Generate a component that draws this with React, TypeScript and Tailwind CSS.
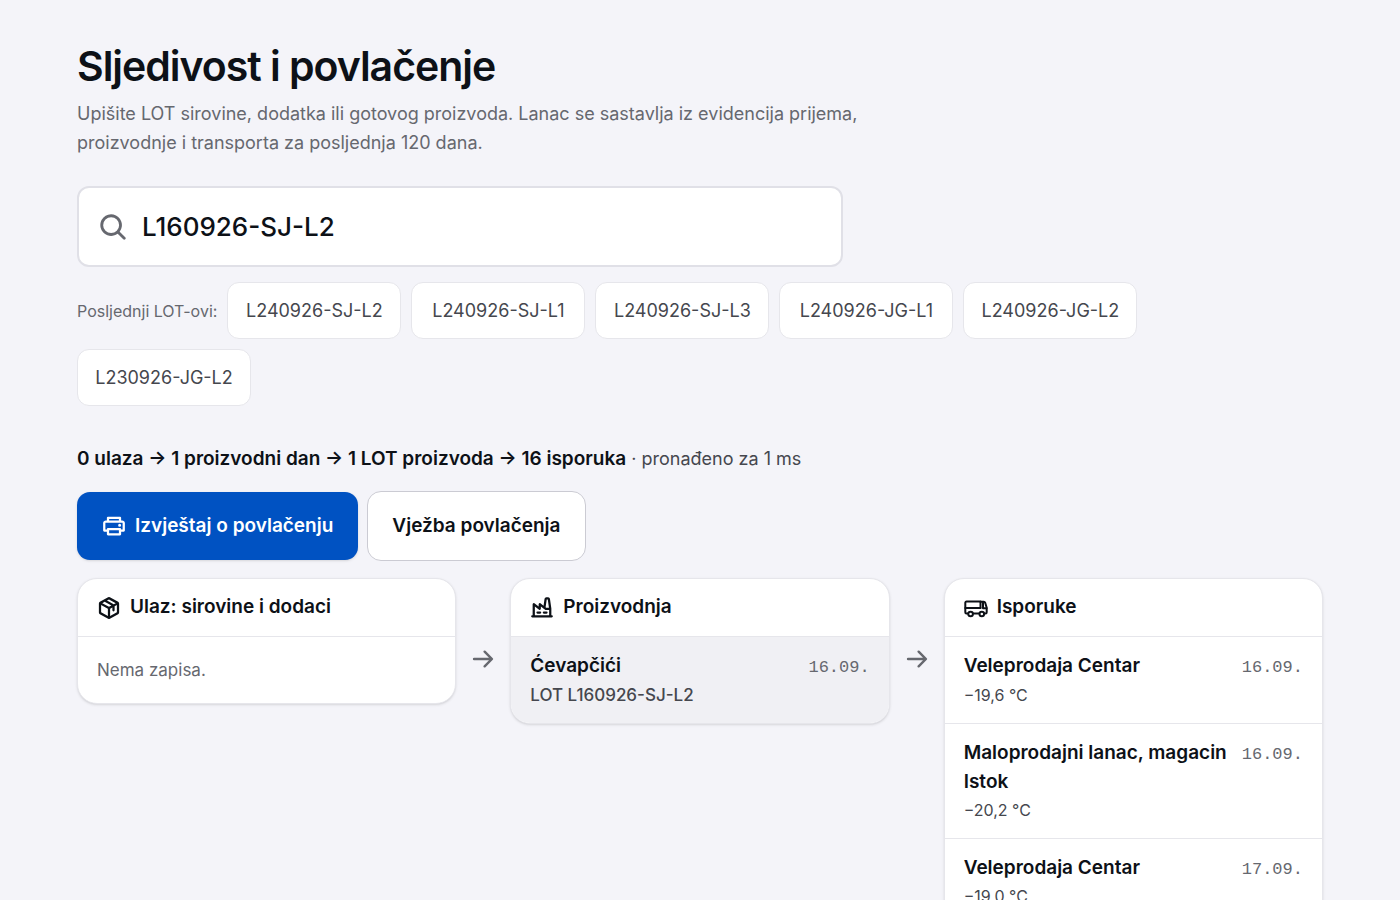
import { useState } from "react"
import { PiArrowRightBold, PiFactoryBold, PiMagnifyingGlassBold, PiPackageBold, PiPrinterBold } from "react-icons/pi"
import type { ComponentType } from "react"

type tRecord = {
    id: number,
    name: string,
    date: string,
    detail: string,
    selected?: boolean
}

const recentLots = [
    "L240926-SJ-L2",
    "L240926-SJ-L1",
    "L240926-SJ-L3",
    "L240926-JG-L1",
    "L240926-JG-L2",
    "L230926-JG-L2"
]

const production: tRecord[] = [
    { id: 1, name: "Ćevapčići", date: "16.09.", detail: "LOT L160926-SJ-L2", selected: true }
]

const deliveries: tRecord[] = [
    { id: 1, name: "Veleprodaja Centar", date: "16.09.", detail: "−19,6 °C" },
    { id: 2, name: "Maloprodajni lanac, magacin Istok", date: "16.09.", detail: "−20,2 °C" },
    { id: 3, name: "Veleprodaja Centar", date: "17.09.", detail: "−19,0 °C" }
]

function TruckIcon({ className }: { className?: string }) {
    return (
        <svg viewBox="0 0 24 24" fill="none" stroke="currentColor" strokeWidth="2" strokeLinecap="round" strokeLinejoin="round" className={className}>
            <path d="M4 17.5H2.5a1.2 1.2 0 0 1-1.2-1.2V6.7a1.2 1.2 0 0 1 1.2-1.2h14v6.2" />
            <path d="M1.3 12h15.2" />
            <path d="M16.5 5.8h3.3a1.5 1.5 0 0 1 1.4 1l1.5 5v4.5a1.2 1.2 0 0 1-1.2 1.2h-1" />
            <path d="M22.5 12.2h-3.5V6.5M9.2 17.5h6" />
            <circle cx="6.6" cy="18" r="2.3" />
            <circle cx="17.8" cy="18" r="2.3" />
        </svg>
    )
}

function Column({ title, icon: Icon, records }: { title: string, icon: ComponentType<{ className?: string }>, records: tRecord[] }) {
    return (
        <section className="min-w-0 flex-1 overflow-hidden rounded-[20px] border border-[#e6e6eb] bg-white shadow-sm">
            <h2 className="flex h-[57px] items-center gap-[9px] px-[19px] text-[19px] font-semibold">
                <Icon className="size-6" />
                {title}
            </h2>
            {records.length === 0 &&
                <p className="border-t border-[#e6e6eb] px-[19px] py-[19px] text-[17px] leading-7 text-[#66686f]">Nema zapisa.</p>
            }
            <ul>
                {records.map((record) =>
                    <li
                        key={record.id}
                        className={record.selected
                            ? "border-t border-[#e6e6eb] bg-[#f0f0f4] px-[19px] py-[14px] text-[17px] font-medium"
                            : "border-t border-[#e6e6eb] px-[19px] py-[14px] text-[16px]"}
                    >
                        <div className="flex items-baseline justify-between gap-3">
                            <span className="text-[19px] leading-[29px] font-semibold">{record.name}</span>
                            <time className="font-['Liberation_Mono',monospace] text-[17px] text-[#66686f]">{record.date}</time>
                        </div>
                        <div className="leading-[28px] text-[#45474e]">{record.detail}</div>
                    </li>
                )}
            </ul>
        </section>
    )
}

function Arrow() {
    return (
        <div className="flex w-[54px] shrink-0 justify-center pt-[68px] text-[#66686f]">
            <PiArrowRightBold className="size-[26px]" />
        </div>
    )
}

export default function App() {

    const [lot, setLot] = useState<string>("L160926-SJ-L2")

    return (
        <main className="min-h-screen bg-[#f4f4f9] px-[77px] pt-[42px] pb-10 font-[Inter,sans-serif] text-[#0d1117]">
            <h1 className="text-[41px] leading-[48px] font-semibold tracking-tight">Sljedivost i povlačenje</h1>
            <p className="mt-[9px] max-w-[820px] text-[18px] leading-[29px] text-[#66686f]">
                Upišite LOT sirovine, dodatka ili gotovog proizvoda. Lanac se sastavlja iz evidencija prijema, proizvodnje i transporta za posljednja 120 dana.
            </p>

            <label className="mt-[29px] flex h-[81px] max-w-[766px] items-center gap-[14px] rounded-xl border-2 border-[#e0e0e7] bg-white px-[19px]">
                <PiMagnifyingGlassBold className="size-[30px] shrink-0 text-[#66686f]" />
                <input
                    type="text"
                    name="lot"
                    aria-label="LOT"
                    value={lot}
                    className="min-w-0 flex-1 text-[26px] font-medium outline-none"
                    onChange={(event) => setLot(event.currentTarget.value)}
                />
            </label>

            <div className="mt-[15px] flex flex-wrap items-center gap-[10px] pr-4">
                <span className="text-[16px] text-[#66686f]">Posljednji LOT-ovi:</span>
                {recentLots.map((item) =>
                    <button
                        key={item}
                        className="h-[57px] min-w-[174px] rounded-xl border border-[#e6e6eb] bg-white px-[17px] text-[18px] text-[#45474e]"
                        onClick={() => setLot(item)}
                    >
                        {item}
                    </button>
                )}
            </div>

            <p className="mt-[38px] text-[18px] leading-[29px] text-[#45474e]">
                <strong className="text-[19px] font-semibold text-[#0d1117]">0 ulaza → 1 proizvodni dan → 1 LOT proizvoda → 16 isporuka</strong> · pronađeno za 1 ms
            </p>

            <div className="mt-[18px] flex items-center gap-[9px]">
                <button className="flex h-[68px] items-center gap-[9px] rounded-[13px] bg-[#0052c2] px-[25px] text-[19px] font-semibold text-white shadow-sm">
                    <PiPrinterBold className="size-6" />
                    Izvještaj o povlačenju
                </button>
                <button className="h-[70px] rounded-[14px] border border-[#cbcbd3] bg-white px-6 text-[19px] font-semibold">
                    Vježba povlačenja
                </button>
            </div>

            <div className="mt-[17px] flex items-start">
                <Column title="Ulaz: sirovine i dodaci" icon={PiPackageBold} records={[]} />
                <Arrow />
                <Column title="Proizvodnja" icon={PiFactoryBold} records={production} />
                <Arrow />
                <Column title="Isporuke" icon={TruckIcon} records={deliveries} />
            </div>
        </main>
    )
}
